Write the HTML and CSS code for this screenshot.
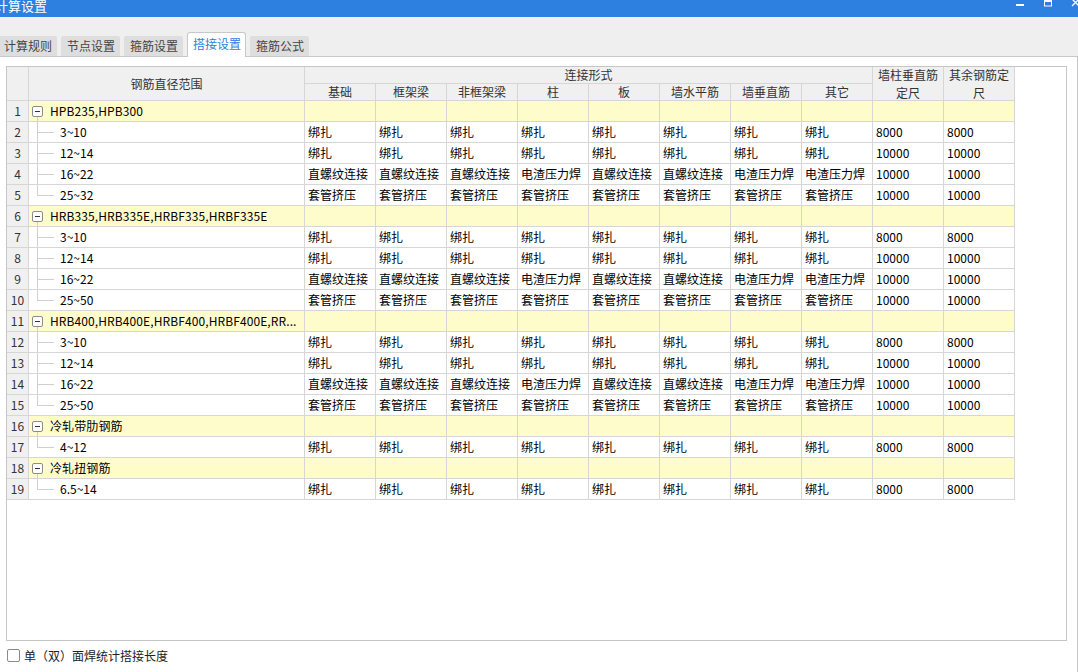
FILE: index.html
```html
<!DOCTYPE html>
<html lang="zh-CN">
<head>
<meta charset="utf-8">
<title>计算设置</title>
<link rel="stylesheet" href="styles.css">
</head>
<body>
<div class="window">
  <div class="titlebar">
    <span class="title">计算设置</span>
    <svg class="controls" width="78" height="17" viewBox="0 0 78 17">
      <rect x="16" y="4" width="8" height="2" fill="#fff"/>
      <rect x="44.5" y="0.5" width="7" height="5.5" fill="none" stroke="#fff" stroke-width="1"/>
      <rect x="44" y="0" width="8" height="2" fill="#fff"/>
      <path d="M72 -1 L79 6 M79 -1 L72 6" stroke="#fff" stroke-width="1.3" fill="none"/>
    </svg>
  </div>
  <div class="tabbar">
    <div class="tab first">计算规则</div>
    <div class="tab">节点设置</div>
    <div class="tab">箍筋设置</div>
    <div class="tab active">搭接设置</div>
    <div class="tab">箍筋公式</div>
  </div>
  <div class="panel">
    <div class="gridbox">
      <table class="grid">
        <colgroup>
          <col class="c-rn"><col class="c-range">
          <col class="c-d"><col class="c-d"><col class="c-d"><col class="c-d"><col class="c-d">
          <col class="c-d"><col class="c-d"><col class="c-d"><col class="c-d"><col class="c-d">
        </colgroup>
        <thead>
          <tr class="h1">
            <th rowspan="2" class="rn"></th>
            <th rowspan="2">钢筋直径范围</th>
            <th colspan="8">连接形式</th>
            <th rowspan="2" class="wrap"><div class="wrapin">墙柱垂直筋定尺</div></th>
            <th rowspan="2" class="wrap"><div class="wrapin">其余钢筋定尺</div></th>
          </tr>
          <tr class="h2">
            <th>基础</th><th>框架梁</th><th>非框架梁</th><th>柱</th><th>板</th><th>墙水平筋</th><th>墙垂直筋</th><th>其它</th>
          </tr>
        </thead>
        <tbody>
          <tr class="group"><td class="rn">1</td><td class="range"><div class="cell"><span class="toggle"></span><span class="gtext">HPB235,HPB300</span></div></td><td></td><td></td><td></td><td></td><td></td><td></td><td></td><td></td><td></td><td></td></tr>
          <tr><td class="rn">2</td><td class="range"><div class="cell"><span class="branch"></span><span class="ctext">3~10</span></div></td><td>绑扎</td><td>绑扎</td><td>绑扎</td><td>绑扎</td><td>绑扎</td><td>绑扎</td><td>绑扎</td><td>绑扎</td><td>8000</td><td>8000</td></tr>
          <tr><td class="rn">3</td><td class="range"><div class="cell"><span class="branch"></span><span class="ctext">12~14</span></div></td><td>绑扎</td><td>绑扎</td><td>绑扎</td><td>绑扎</td><td>绑扎</td><td>绑扎</td><td>绑扎</td><td>绑扎</td><td>10000</td><td>10000</td></tr>
          <tr><td class="rn">4</td><td class="range"><div class="cell"><span class="branch"></span><span class="ctext">16~22</span></div></td><td>直螺纹连接</td><td>直螺纹连接</td><td>直螺纹连接</td><td>电渣压力焊</td><td>直螺纹连接</td><td>直螺纹连接</td><td>电渣压力焊</td><td>电渣压力焊</td><td>10000</td><td>10000</td></tr>
          <tr><td class="rn">5</td><td class="range"><div class="cell"><span class="branch last"></span><span class="ctext">25~32</span></div></td><td>套管挤压</td><td>套管挤压</td><td>套管挤压</td><td>套管挤压</td><td>套管挤压</td><td>套管挤压</td><td>套管挤压</td><td>套管挤压</td><td>10000</td><td>10000</td></tr>
          <tr class="group"><td class="rn">6</td><td class="range"><div class="cell"><span class="toggle"></span><span class="gtext">HRB335,HRB335E,HRBF335,HRBF335E</span></div></td><td></td><td></td><td></td><td></td><td></td><td></td><td></td><td></td><td></td><td></td></tr>
          <tr><td class="rn">7</td><td class="range"><div class="cell"><span class="branch"></span><span class="ctext">3~10</span></div></td><td>绑扎</td><td>绑扎</td><td>绑扎</td><td>绑扎</td><td>绑扎</td><td>绑扎</td><td>绑扎</td><td>绑扎</td><td>8000</td><td>8000</td></tr>
          <tr><td class="rn">8</td><td class="range"><div class="cell"><span class="branch"></span><span class="ctext">12~14</span></div></td><td>绑扎</td><td>绑扎</td><td>绑扎</td><td>绑扎</td><td>绑扎</td><td>绑扎</td><td>绑扎</td><td>绑扎</td><td>10000</td><td>10000</td></tr>
          <tr><td class="rn">9</td><td class="range"><div class="cell"><span class="branch"></span><span class="ctext">16~22</span></div></td><td>直螺纹连接</td><td>直螺纹连接</td><td>直螺纹连接</td><td>电渣压力焊</td><td>直螺纹连接</td><td>直螺纹连接</td><td>电渣压力焊</td><td>电渣压力焊</td><td>10000</td><td>10000</td></tr>
          <tr><td class="rn">10</td><td class="range"><div class="cell"><span class="branch last"></span><span class="ctext">25~50</span></div></td><td>套管挤压</td><td>套管挤压</td><td>套管挤压</td><td>套管挤压</td><td>套管挤压</td><td>套管挤压</td><td>套管挤压</td><td>套管挤压</td><td>10000</td><td>10000</td></tr>
          <tr class="group"><td class="rn">11</td><td class="range"><div class="cell"><span class="toggle"></span><span class="gtext">HRB400,HRB400E,HRBF400,HRBF400E,RR...</span></div></td><td></td><td></td><td></td><td></td><td></td><td></td><td></td><td></td><td></td><td></td></tr>
          <tr><td class="rn">12</td><td class="range"><div class="cell"><span class="branch"></span><span class="ctext">3~10</span></div></td><td>绑扎</td><td>绑扎</td><td>绑扎</td><td>绑扎</td><td>绑扎</td><td>绑扎</td><td>绑扎</td><td>绑扎</td><td>8000</td><td>8000</td></tr>
          <tr><td class="rn">13</td><td class="range"><div class="cell"><span class="branch"></span><span class="ctext">12~14</span></div></td><td>绑扎</td><td>绑扎</td><td>绑扎</td><td>绑扎</td><td>绑扎</td><td>绑扎</td><td>绑扎</td><td>绑扎</td><td>10000</td><td>10000</td></tr>
          <tr><td class="rn">14</td><td class="range"><div class="cell"><span class="branch"></span><span class="ctext">16~22</span></div></td><td>直螺纹连接</td><td>直螺纹连接</td><td>直螺纹连接</td><td>电渣压力焊</td><td>直螺纹连接</td><td>直螺纹连接</td><td>电渣压力焊</td><td>电渣压力焊</td><td>10000</td><td>10000</td></tr>
          <tr><td class="rn">15</td><td class="range"><div class="cell"><span class="branch last"></span><span class="ctext">25~50</span></div></td><td>套管挤压</td><td>套管挤压</td><td>套管挤压</td><td>套管挤压</td><td>套管挤压</td><td>套管挤压</td><td>套管挤压</td><td>套管挤压</td><td>10000</td><td>10000</td></tr>
          <tr class="group"><td class="rn">16</td><td class="range"><div class="cell"><span class="toggle"></span><span class="gtext">冷轧带肋钢筋</span></div></td><td></td><td></td><td></td><td></td><td></td><td></td><td></td><td></td><td></td><td></td></tr>
          <tr><td class="rn">17</td><td class="range"><div class="cell"><span class="branch last"></span><span class="ctext">4~12</span></div></td><td>绑扎</td><td>绑扎</td><td>绑扎</td><td>绑扎</td><td>绑扎</td><td>绑扎</td><td>绑扎</td><td>绑扎</td><td>8000</td><td>8000</td></tr>
          <tr class="group"><td class="rn">18</td><td class="range"><div class="cell"><span class="toggle"></span><span class="gtext">冷轧扭钢筋</span></div></td><td></td><td></td><td></td><td></td><td></td><td></td><td></td><td></td><td></td><td></td></tr>
          <tr><td class="rn">19</td><td class="range"><div class="cell"><span class="branch last"></span><span class="ctext">6.5~14</span></div></td><td>绑扎</td><td>绑扎</td><td>绑扎</td><td>绑扎</td><td>绑扎</td><td>绑扎</td><td>绑扎</td><td>绑扎</td><td>8000</td><td>8000</td></tr>
        </tbody>
      </table>
    </div>
    <label class="checkrow"><span class="checkbox"></span><span class="checklabel">单（双）面焊统计搭接长度</span></label>
  </div>
</div>
</body>
</html>
```
FILE: styles.css
```css
* { box-sizing: border-box; }
html, body {
  margin: 0;
  padding: 0;
}
body {
  width: 1078px;
  height: 672px;
  overflow: hidden;
  background: #efefef;
  font-family: "Noto Sans CJK SC", "Noto Sans", sans-serif;
  font-size: 12px;
  color: #000;
}
.window {
  display: flex;
  flex-direction: column;
  height: 672px;
}
.titlebar {
  height: 17px;
  background: #2d7fe0;
  display: flex;
  align-items: flex-start;
  overflow: hidden;
  flex: none;
}
.title {
  color: #fff;
  font-size: 13px;
  line-height: 13px;
  margin-left: -5px;
  margin-top: -1px;
}
.controls {
  margin-left: auto;
  display: block;
}
.tabbar {
  height: 40px;
  flex: none;
  display: flex;
  align-items: flex-end;
  gap: 4px;
  border-bottom: 1px solid #c9c9c9;
  background: #efefef;
}
.tab {
  height: 20px;
  padding: 0 5px 0 6px;
  background: #dedede;
  color: #444;
  line-height: 20px;
  white-space: nowrap;
  border-radius: 2px 2px 0 0;
}
.tab.first {
  margin-left: -2px;
}
.tab.active {
  height: 25px;
  margin-bottom: -1px;
  background: #fff;
  color: #2d7fe0;
  border: 1px solid #c8c8c8;
  border-bottom: none;
  border-radius: 3px 3px 0 0;
  line-height: 20px;
  padding: 1px 4px 0 5px;
}
.panel {
  flex: 1;
  background: #fff;
  border-right: 1px solid #c8c8c8;
  padding: 9px 10px 0 6px;
}
.gridbox {
  height: 575px;
  border: 1px solid #c6c6c6;
  background: #fff;
  overflow: hidden;
}
.grid {
  table-layout: fixed;
  border-collapse: separate;
  border-spacing: 0;
  width: 1008px;
}
.c-rn { width: 22px; }
.c-range { width: 276px; }
.c-d { width: 71px; }
.grid th, .grid td {
  border-right: 1px solid #d6d6d6;
  border-bottom: 1px solid #d6d6d6;
  padding: 0 0 0 3px;
  white-space: nowrap;
  overflow: hidden;
  font-weight: normal;
  line-height: 16px;
  vertical-align: middle;
}
.grid th {
  background: #f0f0f0;
  color: #333;
  text-align: center;
  padding: 0;
}
.grid th.wrap {
  white-space: normal;
  vertical-align: top;
  padding: 0 3px;
}
.wrapin {
  height: 33px;
  margin-top: -1px;
  line-height: 18px;
}
.grid tr.h1 { height: 17px; }
.grid tr.h2 { height: 17px; }
.grid tbody tr { height: 21px; }
.grid td.rn {
  background: #f0f0f0;
  color: #333;
  text-align: center;
  padding: 0;
}
.grid tr.group td { background: #fffccc; }
.grid tr.group td.rn { background: #f0f0f0; }
.grid td.range { padding: 0; }
.cell {
  display: flex;
  align-items: center;
  height: 20px;
}
.toggle {
  position: relative;
  flex: none;
  width: 11px;
  height: 11px;
  margin-left: 3px;
  border: 1px solid #8c8c8c;
  border-radius: 2px;
  background: #fff;
}
.toggle::before {
  content: "";
  position: absolute;
  left: 2px;
  top: 4px;
  width: 5px;
  height: 1px;
  background: #333;
}
.toggle::after {
  content: "";
  position: absolute;
  left: 4px;
  top: 10px;
  width: 1px;
  height: 5px;
  background: #d0d0d0;
}
.gtext { margin-left: 7px; letter-spacing: 0.1px; }
.branch {
  position: relative;
  flex: none;
  width: 25px;
  height: 20px;
}
.branch::before {
  content: "";
  position: absolute;
  left: 8px;
  top: 0;
  bottom: 0;
  width: 1px;
  background: #d0d0d0;
}
.branch.last::before { bottom: 10px; }
.branch::after {
  content: "";
  position: absolute;
  left: 8px;
  top: 10px;
  width: 17px;
  height: 1px;
  background: #d0d0d0;
}
.ctext { margin-left: 6px; }
.checkrow {
  display: flex;
  align-items: center;
  margin-top: 7px;
  margin-left: 1px;
  height: 14px;
}
.checkbox {
  width: 13px;
  height: 13px;
  border: 1px solid #8a8a8a;
  border-radius: 2px;
  background: #fff;
}
.checklabel {
  margin-left: 4px;
  color: #222;
}
```
